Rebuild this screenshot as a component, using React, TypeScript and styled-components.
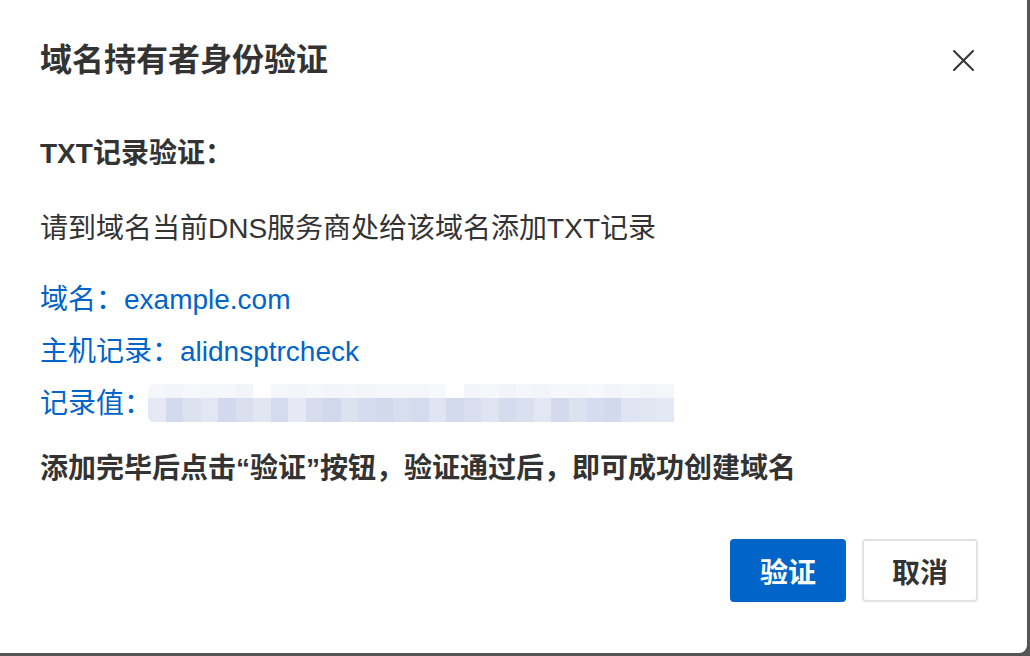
import React from "react";
import styled, { createGlobalStyle } from "styled-components";

const Global = createGlobalStyle`
  html, body { margin: 0; padding: 0; }
  body {
    background: #555555;
    width: 1030px;
    height: 656px;
    overflow: hidden;
    font-family: "Liberation Sans", "Noto Sans CJK SC", sans-serif;
  }
`;

const Dialog = styled.div`
  width: 1027px;
  height: 653px;
  background: #ffffff;
  border-radius: 0 0 8px 0;
  display: flex;
  flex-direction: column;
  box-sizing: border-box;
  color: #333333;
`;

const Header = styled.div`
  display: flex;
  align-items: center;
  justify-content: space-between;
  padding: 40px 52px 0 40px;
  height: 40px;
`;

const Title = styled.h1`
  margin: 0;
  font-size: 32px;
  line-height: 40px;
  font-weight: 600;
  color: #333333;
`;

const CloseButton = styled.button`
  width: 24px;
  height: 24px;
  padding: 0;
  border: 0;
  background: transparent;
  display: flex;
  align-items: center;
  justify-content: center;
  cursor: pointer;
`;

const Body = styled.div`
  padding: 54px 40px 0 40px;
  display: flex;
  flex-direction: column;
`;

const Line = styled.div<{ $bold?: boolean; $gap?: number }>`
  font-size: 28px;
  line-height: 40px;
  font-weight: ${(p) => (p.$bold ? 700 : 400)};
  color: #333333;
  margin-top: ${(p) => p.$gap ?? 0}px;
  white-space: nowrap;
`;

const InfoList = styled.div`
  margin-top: 22px;
  display: flex;
  flex-direction: column;
`;

const InfoRow = styled.div`
  display: flex;
  align-items: center;
  height: 52px;
  font-size: 28px;
  color: #0064c8;
  white-space: nowrap;
`;

const Blur = styled.div`
  display: grid;
  grid-template-columns: repeat(30, 1fr);
  grid-template-rows: 14px 24px;
  width: 526px;
  height: 38px;
  border-radius: 6px 0 0 6px;
  overflow: hidden;
  margin-left: -4px;
  margin-top: 4px;
`;

const Cell = styled.span<{ $c: string }>`
  background: ${(p) => p.$c};
`;

const Footer = styled.div`
  display: flex;
  justify-content: flex-end;
  gap: 16px;
  padding: 50px 49px 0 0;
`;

const Button = styled.button<{ $primary?: boolean }>`
  width: 116px;
  height: 63px;
  box-sizing: border-box;
  border-radius: 4px;
  font-family: inherit;
  font-size: 28px;
  font-weight: 600;
  cursor: pointer;
  background: ${(p) => (p.$primary ? "#0064c8" : "#ffffff")};
  color: ${(p) => (p.$primary ? "#ffffff" : "#333333")};
  border: ${(p) => (p.$primary ? "0" : "2px solid #e3e3e3")};
`;

const topColors = [
  "#f6f7fb", "#f4f5fa", "#f7f8fb", "#f4f6fa", "#f6f7fb", "#f3f4f9",
  "#ffffff", "#f5f6fa", "#f3f5fa", "#f6f7fb", "#f4f5fa", "#f5f6fa",
  "#f3f5f9", "#f6f7fb", "#f4f6fa", "#f5f6fa", "#f7f8fb", "#ffffff",
  "#f4f5fa", "#f6f7fb", "#f3f4f9", "#f5f6fa", "#f4f5fa", "#f6f7fb",
  "#f5f6fa", "#f7f8fb", "#f4f5fa", "#f6f7fb", "#f3f5fa", "#f5f6fa",
];
const bottomColors = [
  "#e6e9f4", "#d3daee", "#dde2f1", "#e3e7f3", "#d2d8ed", "#dbe0f0",
  "#e2e6f3", "#d5dbee", "#e6e9f4", "#d7ddef", "#d1d7ec", "#dde2f1",
  "#d6dcef", "#d3d9ed", "#d9deef", "#d5dbee", "#dfe3f2", "#d4daee",
  "#d8ddef", "#e0e4f2", "#d6dcef", "#dbe0f0", "#e3e7f3", "#d4daee",
  "#dde2f1", "#d6dcef", "#d2d8ed", "#dfe3f2", "#e2e6f3", "#e4e8f4",
];

const CloseIcon = () => (
  <svg width="21" height="21" viewBox="0 0 21 21" fill="none">
    <path d="M1 1L20 20M20 1L1 20" stroke="#333333" strokeWidth="2" strokeLinecap="round" />
  </svg>
);

export default function App() {
  return (
    <>
      <Global />
      <Dialog>
        <Header>
          <Title>域名持有者身份验证</Title>
          <CloseButton aria-label="关闭">
            <CloseIcon />
          </CloseButton>
        </Header>
        <Body>
          <Line $bold>TXT记录验证：</Line>
          <Line $gap={35}>请到域名当前DNS服务商处给该域名添加TXT记录</Line>
          <InfoList>
            <InfoRow>域名：example.com</InfoRow>
            <InfoRow>主机记录：alidnsptrcheck</InfoRow>
            <InfoRow>
              记录值：
              <Blur>
                {topColors.map((c, i) => (
                  <Cell key={"t" + i} $c={c} />
                ))}
                {bottomColors.map((c, i) => (
                  <Cell key={"b" + i} $c={c} />
                ))}
              </Blur>
            </InfoRow>
          </InfoList>
          <Line $bold $gap={22}>添加完毕后点击“验证”按钮，验证通过后，即可成功创建域名</Line>
        </Body>
        <Footer>
          <Button $primary>验证</Button>
          <Button>取消</Button>
        </Footer>
      </Dialog>
    </>
  );
}
